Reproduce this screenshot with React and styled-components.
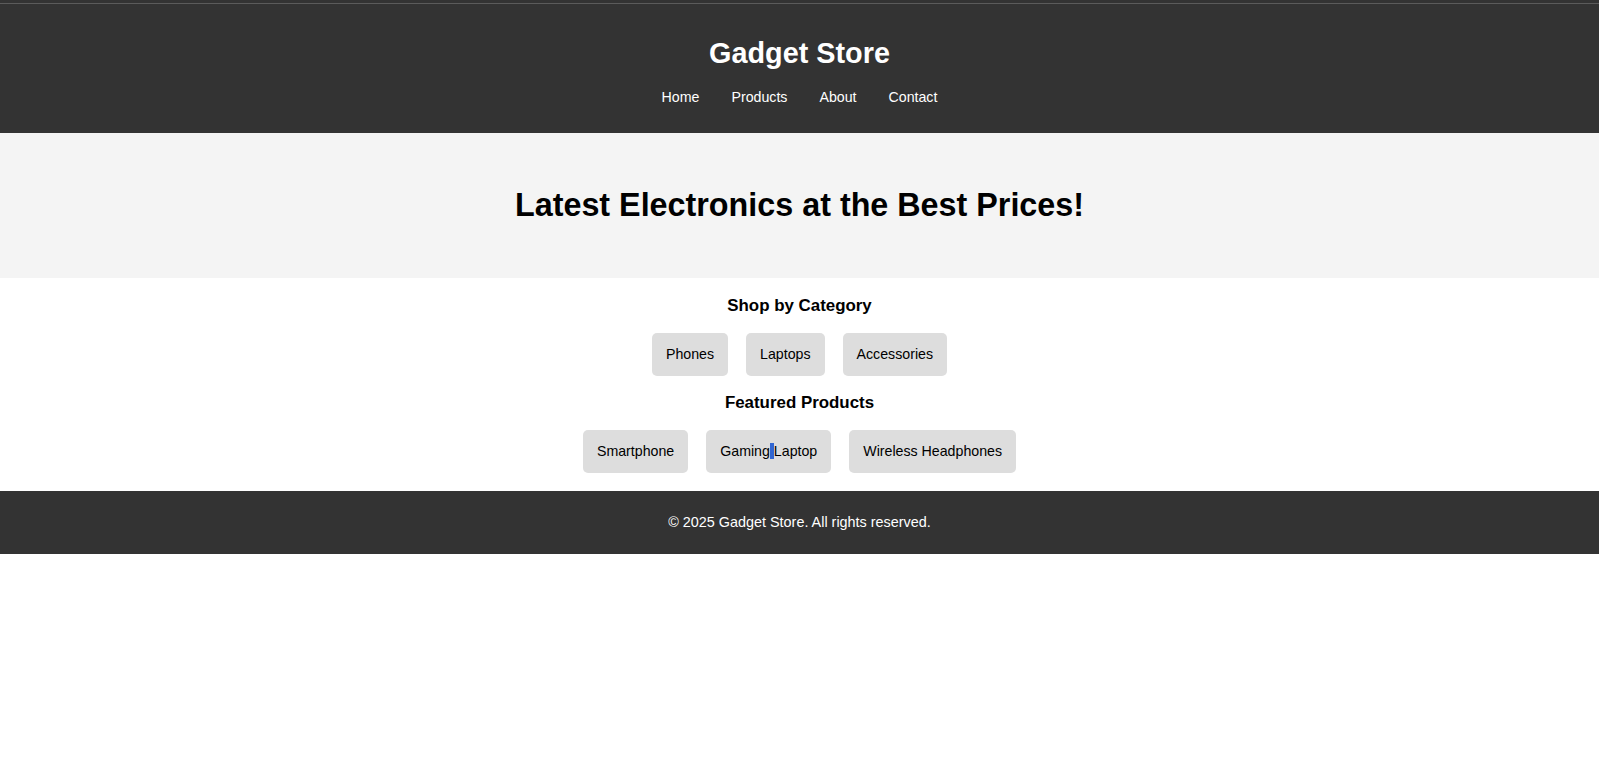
import React from 'react';
import styled, {createGlobalStyle} from 'styled-components';


const GlobalStyle = createGlobalStyle `
body {
  margin: 0;
  background: #fff;
  font-family: "Liberation Sans", Arial, sans-serif;
  font-size: 14px;
  color: #000;
}
`;

const Header = styled.header `
background: linear-gradient(#333 0 3px, #5b5b5b 3px 4px, #333 4px);
color: #fff;
text-align: center;
padding: 37px 20px 28px;
`;

const Logo = styled.h1 `
margin: 0 0 19px;
font-size: 28.8px;
font-weight: bold;
`;

const Nav = styled.nav `
display: flex;
justify-content: center;
gap: 32px;
`;

const NavLink = styled.a `
color: #fff;
text-decoration: none;
font-size: 14.2px;
`;

const Hero = styled.section `
background: #f4f4f4;
text-align: center;
padding: 54px 20px 54px;
`;

const HeroTitle = styled.h2 `
margin: 0;
font-size: 32.3px;
font-weight: bold;
`;

const Main = styled.main `
display: flex;
flex-direction: column;
align-items: center;
gap: 17px;
padding: 18px 20px;
`;

const SectionTitle = styled.h3 `
margin: 0;
font-size: 16.9px;
font-weight: bold;
`;

const Row = styled.div `
display: flex;
justify-content: center;
gap: 18px;
`;

const Tile = styled.div `
background: #ddd;
border-radius: 5px;
padding: 13px 14px;
line-height: 17px;
font-size: 14.2px;
color: #000;
`;

const Selected = styled.span `
background: #3166d2;
`;

const Footer = styled.footer `
background: #333;
color: #fff;
text-align: center;
padding: 23px 20px 24px;
line-height: 16px;
font-size: 14.4px;
`;


const links = ['Home', 'Products', 'About', 'Contact'];
const categories = ['Phones', 'Laptops', 'Accessories'];


export default function App() {
    return (
        <>
        <GlobalStyle/>
        <Header>
            <Logo>Gadget Store</Logo>
            <Nav>
                {links.map(l => <NavLink key={l} href="#">{l}</NavLink>)}
            </Nav>
        </Header>

        <Hero>
            <HeroTitle>Latest Electronics at the Best Prices!</HeroTitle>
        </Hero>

        <Main>
            <SectionTitle>Shop by Category</SectionTitle>
            <Row>
                {categories.map(c => <Tile key={c}>{c}</Tile>)}
            </Row>
            <SectionTitle>Featured Products</SectionTitle>
            <Row>
                <Tile>Smartphone</Tile>
                <Tile>Gaming<Selected> </Selected>Laptop</Tile>
                <Tile>Wireless Headphones</Tile>
            </Row>
        </Main>

        <Footer>© 2025 Gadget Store. All rights reserved.</Footer>
        </>
    );
}
